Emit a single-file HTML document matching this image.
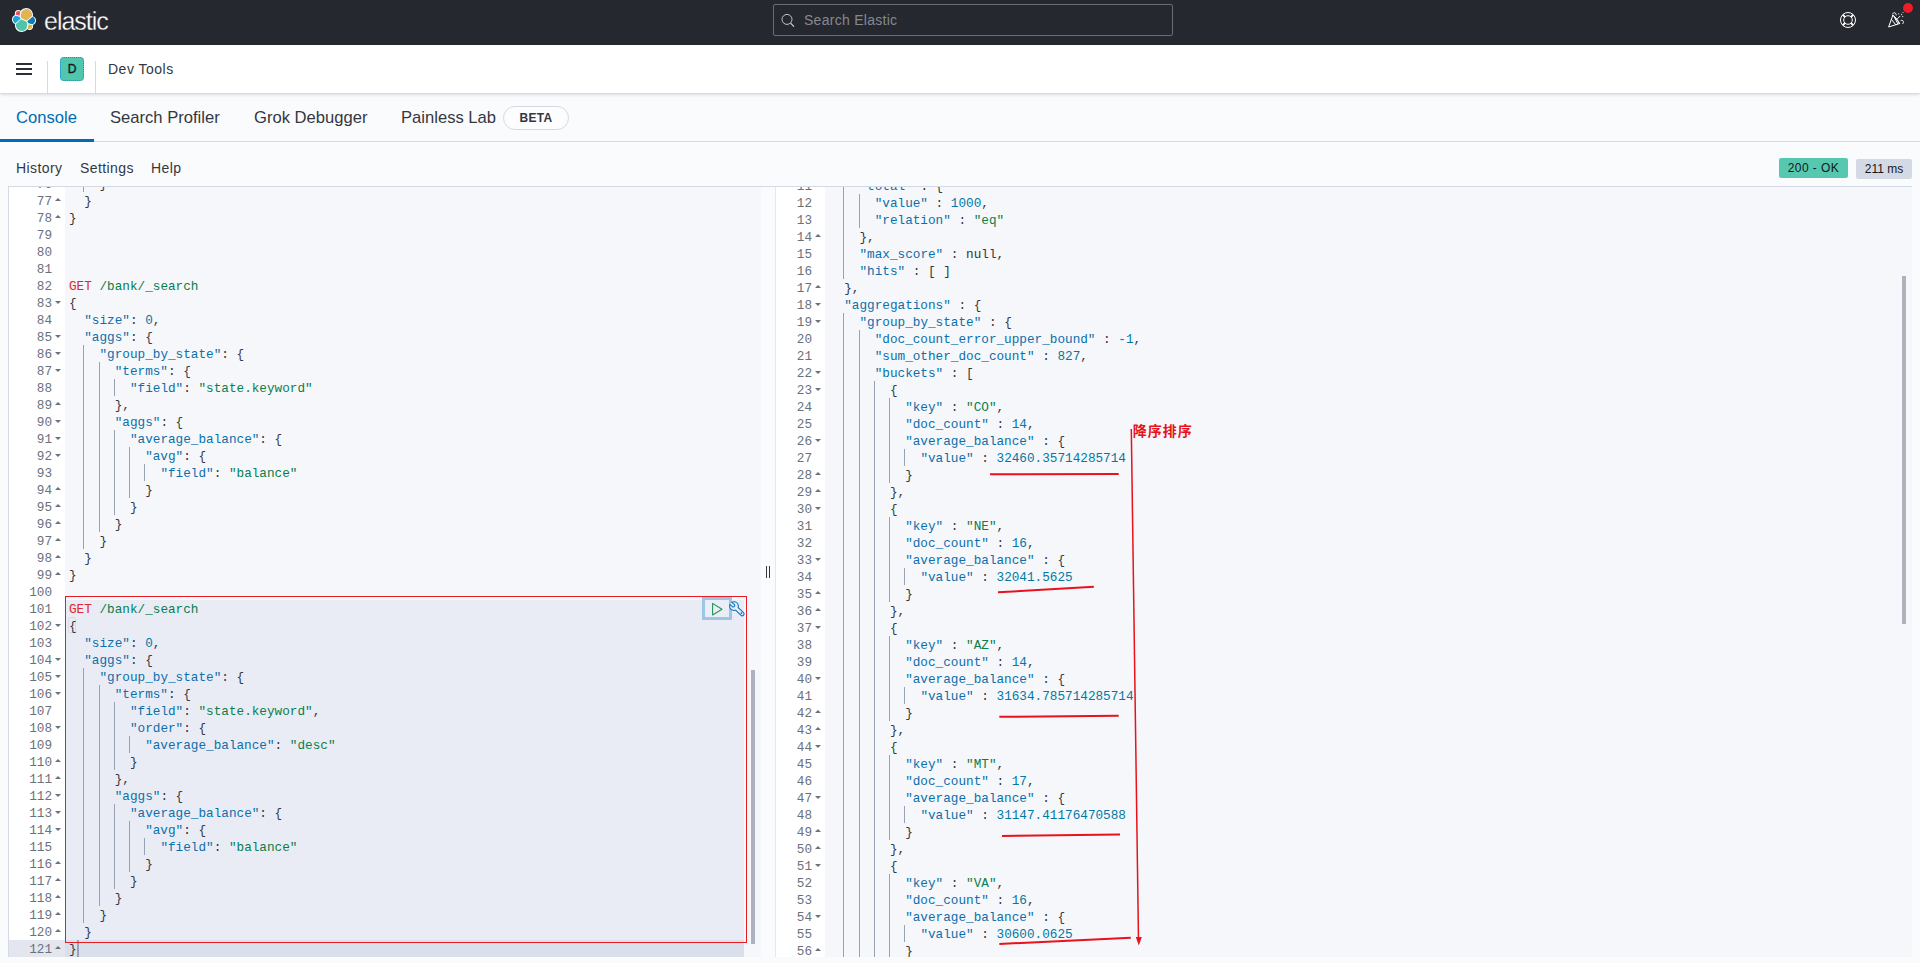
<!DOCTYPE html>
<html lang="en">
<head>
<meta charset="utf-8">
<title>Dev Tools - Console - Elastic</title>
<style>
*{box-sizing:border-box}
html,body{margin:0;padding:0}
body{width:1920px;height:963px;overflow:hidden;position:relative;background:#fafbfd;font-family:"Liberation Sans","Noto Sans CJK SC",sans-serif;color:#343741}
.abs{position:absolute}
#h1{left:0;top:0;width:1920px;height:45px;background:#25282f}
#wordmark{left:44px;top:7px;font-size:25px;line-height:28px;color:#fff;letter-spacing:-1px;white-space:nowrap;-webkit-text-stroke:.3px #25282f}
#search{left:773px;top:4px;width:400px;height:32px;border:1px solid #696c74;border-radius:2px;background:#25282f}
#search span{position:absolute;left:30px;top:7px;font-size:14px;line-height:16px;letter-spacing:.28px;color:#858890;white-space:nowrap}
#h2{left:0;top:45px;width:1920px;height:49px;background:#fff;border-bottom:1px solid #d3dae6;box-shadow:0 2px 3px -1px rgba(152,162,179,.35)}
.bar{left:16px;width:16px;height:2px;background:#2b2e36}
.vsep{top:61px;width:1px;height:32px;background:#d3dae6}
#avatar{left:60px;top:57px;width:24px;height:24px;border-radius:4px;background:#4fc6ad;border:1px dotted #1a8fd1;font-size:12px;line-height:22px;text-align:center;color:#14161d;-webkit-text-stroke:.35px #14161d}
#crumb{left:108px;top:61px;font-size:14px;line-height:16px;letter-spacing:.5px;color:#343741;white-space:nowrap}
.tab{top:108px;font-size:16.6px;line-height:19px;color:#343741;white-space:nowrap}
#tabline{left:0;top:141px;width:1920px;height:1px;background:#d3dae6}
#tabsel{left:0;top:139px;width:94px;height:3px;background:#006bb4}
#beta{left:503px;top:106px;width:66px;height:24px;border:1px solid #d3dae6;border-radius:12px;background:#fcfdfe;font-size:12px;line-height:22px;font-weight:bold;letter-spacing:.3px;text-align:center;color:#343741}
.menu{top:160px;font-size:14px;line-height:16px;letter-spacing:.4px;color:#343741;white-space:nowrap}
.badge{height:20px;border-radius:2px;font-size:12px;line-height:20px;text-align:center;color:#14161d;white-space:nowrap}
/* editors */
.ed{top:186px;height:771px;overflow:hidden;background:#f5f7fa;border-top:1px solid #d3dae6}
.gut{position:absolute;left:0;width:56px;background:#fff;font-family:"Liberation Mono",monospace;font-size:12.7px;line-height:17px;color:#6a717d;text-align:right}
.gut div{height:17px;white-space:pre;padding-right:13px;position:relative}
.gut div span{position:relative;top:1px}
.gut i{position:absolute;right:4px;top:6px;width:0;height:0;border-left:3px solid transparent;border-right:3px solid transparent}
.gut i.u{border-bottom:3px solid #6a717d}
.gut i.d{border-top:3px solid #6a717d;top:7px}
.gut div.a{background:#e3e6ee}
.code{position:absolute;font-family:"Liberation Mono",monospace;font-size:12.7px;line-height:17px;color:#343741}
.code div{height:17px;white-space:pre;position:relative}
.code i{position:absolute;top:0;width:1px;height:17px;background:#98a2b3;text-decoration:none}
.code span{position:relative;top:1px}
.m{color:#e0262f}.u{color:#0a7d4c}.k{color:#0b6fab}.s{color:#0a7d4c}.n{color:#0079a5}.c{color:#343741}.p{color:#343741}
</style>
</head>
<body>
<!-- top dark header -->
<div id="h1" class="abs"></div>
<svg class="abs" style="left:12px;top:8px" width="24" height="24" viewBox="0 0 32 32">
<path fill="#fff" d="M32 16.77a6.334 6.334 0 00-1.14-3.63 6.298 6.298 0 00-3.054-2.286 9.007 9.007 0 00.17-1.7c0-5.023-4.076-9.11-9.09-9.11a9.096 9.096 0 00-7.35 3.743 4.854 4.854 0 00-2.97-1.02 4.83 4.83 0 00-4.823 4.83c0 .59.106 1.18.31 1.74A6.377 6.377 0 000 15.31a6.318 6.318 0 004.07 5.92c-.11.55-.17 1.12-.17 1.69 0 5.01 4.06 9.09 9.06 9.09a9.02 9.02 0 007.35-3.76 4.786 4.786 0 002.97 1.03 4.83 4.83 0 004.82-4.83c0-.59-.11-1.18-.31-1.74A6.373 6.373 0 0032 16.77"/>
<path fill="#e3b552" d="M12.58 13.787l7.002 3.211 7.066-6.213a7.849 7.849 0 00.152-1.557c0-4.287-3.477-7.775-7.751-7.775a7.742 7.742 0 00-6.4 3.388l-1.176 6.116 1.107 2.83z"/>
<path fill="#4ec5ab" d="M5.333 21.231a7.925 7.925 0 00-.151 1.582c0 4.299 3.487 7.797 7.773 7.797a7.749 7.749 0 006.416-3.406l1.166-6.096-1.556-2.985-7.03-3.214-6.618 6.322z"/>
<path fill="#ef5059" d="M5.289 9.079l4.799 1.137 1.051-5.474a3.779 3.779 0 00-2.281-.767 3.808 3.808 0 00-3.798 3.81c0 .455.078.89.229 1.294"/>
<path fill="#1fa3e3" d="M4.872 10.226C2.729 10.939 1.231 13.001 1.231 15.3c0 2.239 1.38 4.238 3.453 5.029l6.732-6.104-1.236-2.65-5.308-1.349z"/>
<path fill="#d4b850" d="M20.87 27.203a3.77 3.77 0 002.273.773 3.808 3.808 0 003.799-3.81c0-.457-.078-.891-.229-1.296l-4.795-1.125-1.048 5.458z"/>
<path fill="#0a7cbe" d="M21.846 20.471l5.279 1.238c2.145-.711 3.643-2.774 3.643-5.074 0-2.235-1.384-4.231-3.459-5.019l-6.904 6.067 1.441 2.788z"/>
</svg>
<div id="wordmark" class="abs">elastic</div>
<div id="search" class="abs">
<svg class="abs" style="left:6px;top:7px" width="16" height="16" viewBox="0 0 16 16"><circle cx="7" cy="7.4" r="5" fill="none" stroke="#c3c4c8" stroke-width="1"/><path d="M10.6 11.2L14 14.6" stroke="#dfe0e3" stroke-width="1.1" fill="none"/></svg>
<span>Search Elastic</span>
</div>
<!-- help + newsfeed -->
<svg class="abs" style="left:1840px;top:12px" width="16" height="16" viewBox="0 0 16 16"><g fill="none" stroke="#fff"><circle cx="8" cy="8" r="7.5" stroke-width="1"/><circle cx="8" cy="8" r="4.300" stroke-width="1"/><path d="M2.700 2.700l2.300 2.300M13.300 2.700l-2.300 2.300M2.700 13.300l2.300-2.300M13.300 13.300l-2.300-2.300" stroke-width="1.900"/></g></svg>
<svg class="abs" style="left:1888px;top:12px" width="17" height="16" viewBox="0 0 17 16"><g fill="none" stroke="#fff" stroke-width="1" stroke-linejoin="round" stroke-linecap="round"><path d="M4.800 3.400L.6 15l10.800-3.400z"/><path d="M3.400 7.400l4.200 5.200M4.800 3.400c2.600 1.200 5.200 4.600 6.600 8.200M6.400 5.200l3.400 6.600"/><path d="M4.600 2c.6-2.200 3.800-1.600 3.600 1"/><path d="M13 8.400c2.400-.6 3.400 1.800 1.600 3.400"/><path d="M9.600 6.600l2.400-2.400"/></g><g fill="#fff"><circle cx="10.800" cy="1.800" r=".6"/><circle cx="13.600" cy="2.600" r=".6"/><circle cx="15" cy=".6" r=".5"/><circle cx="14.800" cy="4.600" r=".6"/></g></svg>
<div class="abs" style="left:1903px;top:3px;width:10px;height:10px;border-radius:50%;background:#ee1c25"></div>
<!-- second header -->
<div id="h2" class="abs"></div>
<div class="abs bar" style="top:63px"></div><div class="abs bar" style="top:68px"></div><div class="abs bar" style="top:73px"></div>
<div class="abs vsep" style="left:47px"></div><div class="abs vsep" style="left:95px"></div>
<div id="avatar" class="abs">D</div>
<div id="crumb" class="abs">Dev Tools</div>
<!-- tabs -->
<div id="tabline" class="abs"></div><div id="tabsel" class="abs"></div>
<div class="abs tab" style="left:16px;color:#006bb4">Console</div>
<div class="abs tab" style="left:110px">Search Profiler</div>
<div class="abs tab" style="left:254px">Grok Debugger</div>
<div class="abs tab" style="left:401px">Painless Lab</div>
<div id="beta" class="abs">BETA</div>
<!-- console menu -->
<div class="abs menu" style="left:16px">History</div>
<div class="abs menu" style="left:80px">Settings</div>
<div class="abs menu" style="left:151px">Help</div>
<div class="abs badge" style="left:1779px;top:158px;width:69px;background:#55c8af;letter-spacing:.45px">200 - OK</div>
<div class="abs badge" style="left:1856px;top:159px;width:56px;background:#d3dae6">211 ms</div>
<div class="abs" style="left:8px;top:186px;width:1904px;height:1px;background:#d3dae6"></div>
<!-- left editor -->
<div id="led" class="abs ed" style="left:8px;width:753px;border-left:1px solid #d3dae6">
<div class="gut" style="top:-12px">
<div><span>76</span><i class="u"></i></div>
<div><span>77</span><i class="u"></i></div>
<div><span>78</span><i class="u"></i></div>
<div><span>79</span></div>
<div><span>80</span></div>
<div><span>81</span></div>
<div><span>82</span></div>
<div><span>83</span><i class="d"></i></div>
<div><span>84</span></div>
<div><span>85</span><i class="d"></i></div>
<div><span>86</span><i class="d"></i></div>
<div><span>87</span><i class="d"></i></div>
<div><span>88</span></div>
<div><span>89</span><i class="u"></i></div>
<div><span>90</span><i class="d"></i></div>
<div><span>91</span><i class="d"></i></div>
<div><span>92</span><i class="d"></i></div>
<div><span>93</span></div>
<div><span>94</span><i class="u"></i></div>
<div><span>95</span><i class="u"></i></div>
<div><span>96</span><i class="u"></i></div>
<div><span>97</span><i class="u"></i></div>
<div><span>98</span><i class="u"></i></div>
<div><span>99</span><i class="u"></i></div>
<div><span>100</span></div>
<div><span>101</span></div>
<div><span>102</span><i class="d"></i></div>
<div><span>103</span></div>
<div><span>104</span><i class="d"></i></div>
<div><span>105</span><i class="d"></i></div>
<div><span>106</span><i class="d"></i></div>
<div><span>107</span></div>
<div><span>108</span><i class="d"></i></div>
<div><span>109</span></div>
<div><span>110</span><i class="u"></i></div>
<div><span>111</span><i class="u"></i></div>
<div><span>112</span><i class="d"></i></div>
<div><span>113</span><i class="d"></i></div>
<div><span>114</span><i class="d"></i></div>
<div><span>115</span></div>
<div><span>116</span><i class="u"></i></div>
<div><span>117</span><i class="u"></i></div>
<div><span>118</span><i class="u"></i></div>
<div><span>119</span><i class="u"></i></div>
<div><span>120</span><i class="u"></i></div>
<div class="a"><span>121</span><i class="u"></i></div>
</div>
<div class="abs" style="left:56px;top:413px;width:679px;height:357px;background:#e9ecf5"></div>
<div class="abs" style="left:56px;top:753px;width:679px;height:17px;background:#dae0eb"></div>
<div class="abs" style="left:59px;top:430px;width:8px;height:16px;border:1px solid #d6dbe6;border-radius:2px"></div>
<div class="code" style="left:60px;top:-12px">
<div><i style="left:14px"></i>    <span class="p">}</span></div>
<div>  <span class="p">}</span></div>
<div><span class="p">}</span></div>
<div></div>
<div></div>
<div></div>
<div><span class="m">GET</span> <span class="u">/bank/_search</span></div>
<div><span class="p">{</span></div>
<div>  <span class="k">&quot;size&quot;</span><span class="p">: </span><span class="n">0</span><span class="p">,</span></div>
<div>  <span class="k">&quot;aggs&quot;</span><span class="p">: </span><span class="p">{</span></div>
<div><i style="left:14px"></i>    <span class="k">&quot;group_by_state&quot;</span><span class="p">: </span><span class="p">{</span></div>
<div><i style="left:14px"></i><i style="left:30px"></i>      <span class="k">&quot;terms&quot;</span><span class="p">: </span><span class="p">{</span></div>
<div><i style="left:14px"></i><i style="left:30px"></i><i style="left:45px"></i>        <span class="k">&quot;field&quot;</span><span class="p">: </span><span class="s">&quot;state.keyword&quot;</span></div>
<div><i style="left:14px"></i><i style="left:30px"></i>      <span class="p">},</span></div>
<div><i style="left:14px"></i><i style="left:30px"></i>      <span class="k">&quot;aggs&quot;</span><span class="p">: </span><span class="p">{</span></div>
<div><i style="left:14px"></i><i style="left:30px"></i><i style="left:45px"></i>        <span class="k">&quot;average_balance&quot;</span><span class="p">: </span><span class="p">{</span></div>
<div><i style="left:14px"></i><i style="left:30px"></i><i style="left:45px"></i><i style="left:60px"></i>          <span class="k">&quot;avg&quot;</span><span class="p">: </span><span class="p">{</span></div>
<div><i style="left:14px"></i><i style="left:30px"></i><i style="left:45px"></i><i style="left:60px"></i><i style="left:75px"></i>            <span class="k">&quot;field&quot;</span><span class="p">: </span><span class="s">&quot;balance&quot;</span></div>
<div><i style="left:14px"></i><i style="left:30px"></i><i style="left:45px"></i><i style="left:60px"></i>          <span class="p">}</span></div>
<div><i style="left:14px"></i><i style="left:30px"></i><i style="left:45px"></i>        <span class="p">}</span></div>
<div><i style="left:14px"></i><i style="left:30px"></i>      <span class="p">}</span></div>
<div><i style="left:14px"></i>    <span class="p">}</span></div>
<div>  <span class="p">}</span></div>
<div><span class="p">}</span></div>
<div></div>
<div><span class="m">GET</span> <span class="u">/bank/_search</span></div>
<div><span class="p">{</span></div>
<div>  <span class="k">&quot;size&quot;</span><span class="p">: </span><span class="n">0</span><span class="p">,</span></div>
<div>  <span class="k">&quot;aggs&quot;</span><span class="p">: </span><span class="p">{</span></div>
<div><i style="left:14px"></i>    <span class="k">&quot;group_by_state&quot;</span><span class="p">: </span><span class="p">{</span></div>
<div><i style="left:14px"></i><i style="left:30px"></i>      <span class="k">&quot;terms&quot;</span><span class="p">: </span><span class="p">{</span></div>
<div><i style="left:14px"></i><i style="left:30px"></i><i style="left:45px"></i>        <span class="k">&quot;field&quot;</span><span class="p">: </span><span class="s">&quot;state.keyword&quot;</span><span class="p">,</span></div>
<div><i style="left:14px"></i><i style="left:30px"></i><i style="left:45px"></i>        <span class="k">&quot;order&quot;</span><span class="p">: </span><span class="p">{</span></div>
<div><i style="left:14px"></i><i style="left:30px"></i><i style="left:45px"></i><i style="left:60px"></i>          <span class="k">&quot;average_balance&quot;</span><span class="p">: </span><span class="s">&quot;desc&quot;</span></div>
<div><i style="left:14px"></i><i style="left:30px"></i><i style="left:45px"></i>        <span class="p">}</span></div>
<div><i style="left:14px"></i><i style="left:30px"></i>      <span class="p">},</span></div>
<div><i style="left:14px"></i><i style="left:30px"></i>      <span class="k">&quot;aggs&quot;</span><span class="p">: </span><span class="p">{</span></div>
<div><i style="left:14px"></i><i style="left:30px"></i><i style="left:45px"></i>        <span class="k">&quot;average_balance&quot;</span><span class="p">: </span><span class="p">{</span></div>
<div><i style="left:14px"></i><i style="left:30px"></i><i style="left:45px"></i><i style="left:60px"></i>          <span class="k">&quot;avg&quot;</span><span class="p">: </span><span class="p">{</span></div>
<div><i style="left:14px"></i><i style="left:30px"></i><i style="left:45px"></i><i style="left:60px"></i><i style="left:75px"></i>            <span class="k">&quot;field&quot;</span><span class="p">: </span><span class="s">&quot;balance&quot;</span></div>
<div><i style="left:14px"></i><i style="left:30px"></i><i style="left:45px"></i><i style="left:60px"></i>          <span class="p">}</span></div>
<div><i style="left:14px"></i><i style="left:30px"></i><i style="left:45px"></i>        <span class="p">}</span></div>
<div><i style="left:14px"></i><i style="left:30px"></i>      <span class="p">}</span></div>
<div><i style="left:14px"></i>    <span class="p">}</span></div>
<div>  <span class="p">}</span></div>
<div><span class="p">}</span></div>
</div>
</div>
<!-- right editor -->
<div id="red" class="abs ed" style="left:775px;width:1137px;border-left:1px solid #e3e8f0">
<div class="gut" style="top:-10px;width:49px">
<div><span>11</span><i class="d"></i></div>
<div><span>12</span></div>
<div><span>13</span></div>
<div><span>14</span><i class="u"></i></div>
<div><span>15</span></div>
<div><span>16</span></div>
<div><span>17</span><i class="u"></i></div>
<div><span>18</span><i class="d"></i></div>
<div><span>19</span><i class="d"></i></div>
<div><span>20</span></div>
<div><span>21</span></div>
<div><span>22</span><i class="d"></i></div>
<div><span>23</span><i class="d"></i></div>
<div><span>24</span></div>
<div><span>25</span></div>
<div><span>26</span><i class="d"></i></div>
<div><span>27</span></div>
<div><span>28</span><i class="u"></i></div>
<div><span>29</span><i class="u"></i></div>
<div><span>30</span><i class="d"></i></div>
<div><span>31</span></div>
<div><span>32</span></div>
<div><span>33</span><i class="d"></i></div>
<div><span>34</span></div>
<div><span>35</span><i class="u"></i></div>
<div><span>36</span><i class="u"></i></div>
<div><span>37</span><i class="d"></i></div>
<div><span>38</span></div>
<div><span>39</span></div>
<div><span>40</span><i class="d"></i></div>
<div><span>41</span></div>
<div><span>42</span><i class="u"></i></div>
<div><span>43</span><i class="u"></i></div>
<div><span>44</span><i class="d"></i></div>
<div><span>45</span></div>
<div><span>46</span></div>
<div><span>47</span><i class="d"></i></div>
<div><span>48</span></div>
<div><span>49</span><i class="u"></i></div>
<div><span>50</span><i class="u"></i></div>
<div><span>51</span><i class="d"></i></div>
<div><span>52</span></div>
<div><span>53</span></div>
<div><span>54</span><i class="d"></i></div>
<div><span>55</span></div>
<div><span>56</span><i class="u"></i></div>
</div>
<div class="code" style="left:53px;top:-10px">
<div><i style="left:14px"></i>    <span class="k">&quot;total&quot;</span><span class="p"> : </span><span class="p">{</span></div>
<div><i style="left:14px"></i><i style="left:30px"></i>      <span class="k">&quot;value&quot;</span><span class="p"> : </span><span class="n">1000</span><span class="p">,</span></div>
<div><i style="left:14px"></i><i style="left:30px"></i>      <span class="k">&quot;relation&quot;</span><span class="p"> : </span><span class="s">&quot;eq&quot;</span></div>
<div><i style="left:14px"></i>    <span class="p">},</span></div>
<div><i style="left:14px"></i>    <span class="k">&quot;max_score&quot;</span><span class="p"> : </span><span class="c">null</span><span class="p">,</span></div>
<div><i style="left:14px"></i>    <span class="k">&quot;hits&quot;</span><span class="p"> : </span><span class="p">[ ]</span></div>
<div>  <span class="p">},</span></div>
<div>  <span class="k">&quot;aggregations&quot;</span><span class="p"> : </span><span class="p">{</span></div>
<div><i style="left:14px"></i>    <span class="k">&quot;group_by_state&quot;</span><span class="p"> : </span><span class="p">{</span></div>
<div><i style="left:14px"></i><i style="left:30px"></i>      <span class="k">&quot;doc_count_error_upper_bound&quot;</span><span class="p"> : </span><span class="n">-1</span><span class="p">,</span></div>
<div><i style="left:14px"></i><i style="left:30px"></i>      <span class="k">&quot;sum_other_doc_count&quot;</span><span class="p"> : </span><span class="n">827</span><span class="p">,</span></div>
<div><i style="left:14px"></i><i style="left:30px"></i>      <span class="k">&quot;buckets&quot;</span><span class="p"> : </span><span class="p">[</span></div>
<div><i style="left:14px"></i><i style="left:30px"></i><i style="left:45px"></i>        <span class="p">{</span></div>
<div><i style="left:14px"></i><i style="left:30px"></i><i style="left:45px"></i><i style="left:60px"></i>          <span class="k">&quot;key&quot;</span><span class="p"> : </span><span class="s">&quot;CO&quot;</span><span class="p">,</span></div>
<div><i style="left:14px"></i><i style="left:30px"></i><i style="left:45px"></i><i style="left:60px"></i>          <span class="k">&quot;doc_count&quot;</span><span class="p"> : </span><span class="n">14</span><span class="p">,</span></div>
<div><i style="left:14px"></i><i style="left:30px"></i><i style="left:45px"></i><i style="left:60px"></i>          <span class="k">&quot;average_balance&quot;</span><span class="p"> : </span><span class="p">{</span></div>
<div><i style="left:14px"></i><i style="left:30px"></i><i style="left:45px"></i><i style="left:60px"></i><i style="left:75px"></i>            <span class="k">&quot;value&quot;</span><span class="p"> : </span><span class="n">32460.35714285714</span></div>
<div><i style="left:14px"></i><i style="left:30px"></i><i style="left:45px"></i><i style="left:60px"></i>          <span class="p">}</span></div>
<div><i style="left:14px"></i><i style="left:30px"></i><i style="left:45px"></i>        <span class="p">},</span></div>
<div><i style="left:14px"></i><i style="left:30px"></i><i style="left:45px"></i>        <span class="p">{</span></div>
<div><i style="left:14px"></i><i style="left:30px"></i><i style="left:45px"></i><i style="left:60px"></i>          <span class="k">&quot;key&quot;</span><span class="p"> : </span><span class="s">&quot;NE&quot;</span><span class="p">,</span></div>
<div><i style="left:14px"></i><i style="left:30px"></i><i style="left:45px"></i><i style="left:60px"></i>          <span class="k">&quot;doc_count&quot;</span><span class="p"> : </span><span class="n">16</span><span class="p">,</span></div>
<div><i style="left:14px"></i><i style="left:30px"></i><i style="left:45px"></i><i style="left:60px"></i>          <span class="k">&quot;average_balance&quot;</span><span class="p"> : </span><span class="p">{</span></div>
<div><i style="left:14px"></i><i style="left:30px"></i><i style="left:45px"></i><i style="left:60px"></i><i style="left:75px"></i>            <span class="k">&quot;value&quot;</span><span class="p"> : </span><span class="n">32041.5625</span></div>
<div><i style="left:14px"></i><i style="left:30px"></i><i style="left:45px"></i><i style="left:60px"></i>          <span class="p">}</span></div>
<div><i style="left:14px"></i><i style="left:30px"></i><i style="left:45px"></i>        <span class="p">},</span></div>
<div><i style="left:14px"></i><i style="left:30px"></i><i style="left:45px"></i>        <span class="p">{</span></div>
<div><i style="left:14px"></i><i style="left:30px"></i><i style="left:45px"></i><i style="left:60px"></i>          <span class="k">&quot;key&quot;</span><span class="p"> : </span><span class="s">&quot;AZ&quot;</span><span class="p">,</span></div>
<div><i style="left:14px"></i><i style="left:30px"></i><i style="left:45px"></i><i style="left:60px"></i>          <span class="k">&quot;doc_count&quot;</span><span class="p"> : </span><span class="n">14</span><span class="p">,</span></div>
<div><i style="left:14px"></i><i style="left:30px"></i><i style="left:45px"></i><i style="left:60px"></i>          <span class="k">&quot;average_balance&quot;</span><span class="p"> : </span><span class="p">{</span></div>
<div><i style="left:14px"></i><i style="left:30px"></i><i style="left:45px"></i><i style="left:60px"></i><i style="left:75px"></i>            <span class="k">&quot;value&quot;</span><span class="p"> : </span><span class="n">31634.785714285714</span></div>
<div><i style="left:14px"></i><i style="left:30px"></i><i style="left:45px"></i><i style="left:60px"></i>          <span class="p">}</span></div>
<div><i style="left:14px"></i><i style="left:30px"></i><i style="left:45px"></i>        <span class="p">},</span></div>
<div><i style="left:14px"></i><i style="left:30px"></i><i style="left:45px"></i>        <span class="p">{</span></div>
<div><i style="left:14px"></i><i style="left:30px"></i><i style="left:45px"></i><i style="left:60px"></i>          <span class="k">&quot;key&quot;</span><span class="p"> : </span><span class="s">&quot;MT&quot;</span><span class="p">,</span></div>
<div><i style="left:14px"></i><i style="left:30px"></i><i style="left:45px"></i><i style="left:60px"></i>          <span class="k">&quot;doc_count&quot;</span><span class="p"> : </span><span class="n">17</span><span class="p">,</span></div>
<div><i style="left:14px"></i><i style="left:30px"></i><i style="left:45px"></i><i style="left:60px"></i>          <span class="k">&quot;average_balance&quot;</span><span class="p"> : </span><span class="p">{</span></div>
<div><i style="left:14px"></i><i style="left:30px"></i><i style="left:45px"></i><i style="left:60px"></i><i style="left:75px"></i>            <span class="k">&quot;value&quot;</span><span class="p"> : </span><span class="n">31147.41176470588</span></div>
<div><i style="left:14px"></i><i style="left:30px"></i><i style="left:45px"></i><i style="left:60px"></i>          <span class="p">}</span></div>
<div><i style="left:14px"></i><i style="left:30px"></i><i style="left:45px"></i>        <span class="p">},</span></div>
<div><i style="left:14px"></i><i style="left:30px"></i><i style="left:45px"></i>        <span class="p">{</span></div>
<div><i style="left:14px"></i><i style="left:30px"></i><i style="left:45px"></i><i style="left:60px"></i>          <span class="k">&quot;key&quot;</span><span class="p"> : </span><span class="s">&quot;VA&quot;</span><span class="p">,</span></div>
<div><i style="left:14px"></i><i style="left:30px"></i><i style="left:45px"></i><i style="left:60px"></i>          <span class="k">&quot;doc_count&quot;</span><span class="p"> : </span><span class="n">16</span><span class="p">,</span></div>
<div><i style="left:14px"></i><i style="left:30px"></i><i style="left:45px"></i><i style="left:60px"></i>          <span class="k">&quot;average_balance&quot;</span><span class="p"> : </span><span class="p">{</span></div>
<div><i style="left:14px"></i><i style="left:30px"></i><i style="left:45px"></i><i style="left:60px"></i><i style="left:75px"></i>            <span class="k">&quot;value&quot;</span><span class="p"> : </span><span class="n">30600.0625</span></div>
<div><i style="left:14px"></i><i style="left:30px"></i><i style="left:45px"></i><i style="left:60px"></i>          <span class="p">}</span></div>
</div>
</div>
<!-- divider grip -->
<div class="abs" style="left:766px;top:566px;width:1px;height:12px;background:#343741"></div>
<div class="abs" style="left:769px;top:566px;width:1px;height:12px;background:#343741"></div>
<!-- scrollbars -->
<div class="abs" style="left:751px;top:670px;width:4px;height:274px;background:#aeb2bd"></div>
<div class="abs" style="left:1902px;top:276px;width:4px;height:348px;background:#aeb2bd"></div>
<!-- request action buttons -->
<div class="abs" style="left:702px;top:597px;width:30px;height:23px;border:3px solid #9fc5e6;background:#ebeef6"></div>
<svg class="abs" style="left:709px;top:601px" width="16" height="16" viewBox="0 0 16 16"><path d="M3.6 2.4L13 8.2 3.6 14z" fill="none" stroke="#23935a" stroke-width="1.1" stroke-linejoin="round"/></svg>
<svg class="abs" style="left:724px;top:596px" width="26" height="26" viewBox="724 596 26 26"><defs><clipPath id="wc"><circle cx="734" cy="606.100" r="4.900"/></clipPath></defs><g fill="none" stroke-linecap="round">
<path d="M734 606.100L742.300 614" stroke="#0f74b8" stroke-width="4.700"/>
<circle cx="734" cy="606.100" r="4.900" fill="#0f74b8" stroke="none"/>
<path d="M734 606.100L742.300 614" stroke="#e9ecf5" stroke-width="2.500"/>
<circle cx="734" cy="606.100" r="3.800" fill="#e9ecf5" stroke="none"/>
<g clip-path="url(#wc)"><path d="M728 600.800L733.300 605.500" stroke="#0f74b8" stroke-width="3.800"/>
<path d="M727 600L733.300 605.500" stroke="#e9ecf5" stroke-width="1.700"/></g>
</g><circle cx="741.400" cy="613.200" r=".85" fill="#0f74b8"/></svg>
<!-- cursor -->
<div class="abs" style="left:77px;top:940px;width:2px;height:17px;background:#98a2b3"></div>
<!-- annotations -->
<div class="abs" style="left:65px;top:596px;width:682px;height:347px;border:1px solid #e81c24"></div>
<svg class="abs" style="left:0;top:0;pointer-events:none" width="1920" height="963" viewBox="0 0 1920 963">
<g stroke="#e8111c" fill="none" stroke-linecap="butt">
<path d="M990 474.300L1118.700 474" stroke-width="2"/>
<path d="M998 592.300L1093.800 586.800" stroke-width="2"/>
<path d="M999.300 716.800L1118.700 715.800" stroke-width="2"/>
<path d="M1002 836L1120 834.600" stroke-width="2"/>
<path d="M999.300 944L1130.800 937.800" stroke-width="2"/>
<path d="M1131.300 429L1138.500 940" stroke-width="1.500"/>
</g>
<path d="M1135.800 937L1141.800 937L1138.800 945.500z" fill="#e8111c"/>
<text x="1132.800" y="435.600" font-family="'Liberation Sans','Noto Sans CJK SC',sans-serif" font-weight="bold" font-size="14" letter-spacing="1" fill="#e8111c">降序排序</text>
</svg>
</body>
</html>
